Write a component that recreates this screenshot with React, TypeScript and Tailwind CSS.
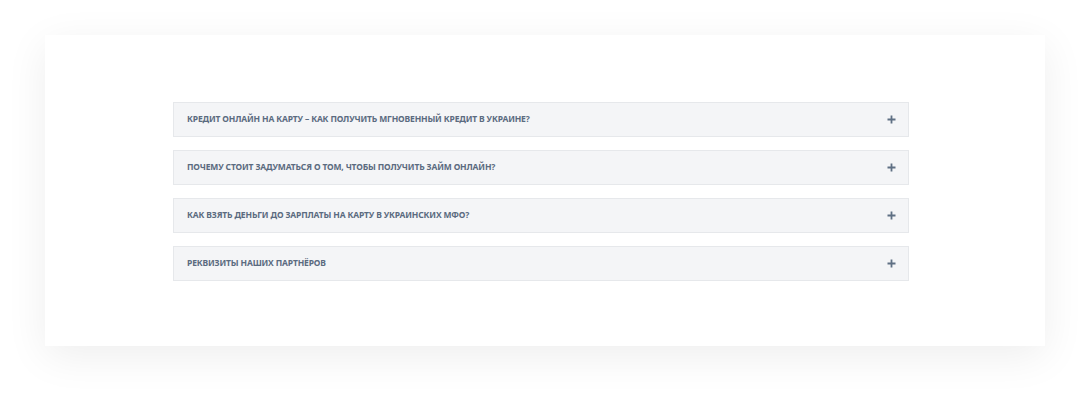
const items = [
  "Кредит онлайн на карту – как получить мгновенный кредит в Украине?",
  "Почему стоит задуматься о том, чтобы получить займ онлайн?",
  "Как взять деньги до зарплаты на карту в украинских МФО?",
  "Реквизиты наших партнёров",
];

const App = () => {
  return (
    <div className="w-[1090px] h-[401px] bg-white pt-[35px] pl-[45px] font-['Noto_Sans',sans-serif]">
      {/* Card */}
      <div className="w-[1000px] h-[311px] bg-white shadow-[0_10px_40px_rgba(0,0,0,0.07)] pt-[67px] pl-[128px]">
        {/* Accordion */}
        <div className="w-[736px] flex flex-col gap-[13px]">
          {items.map((t) => (
            <div
              key={t}
              className="h-[35px] bg-[#f4f5f7] border border-[#e6e8eb] flex items-center justify-between pl-[13px] pr-[12px]"
            >
              <span className="text-[8.5px] font-bold uppercase text-[#5b6b80] tracking-[-0.15px]">{t}</span>
              <svg width="9" height="9" viewBox="0 0 9 9">
                <path d="M4.5 0.5v8M0.5 4.5h8" stroke="#5f7084" strokeWidth="1.8" />
              </svg>
            </div>
          ))}
        </div>
      </div>
    </div>
  );
};

export default App;
